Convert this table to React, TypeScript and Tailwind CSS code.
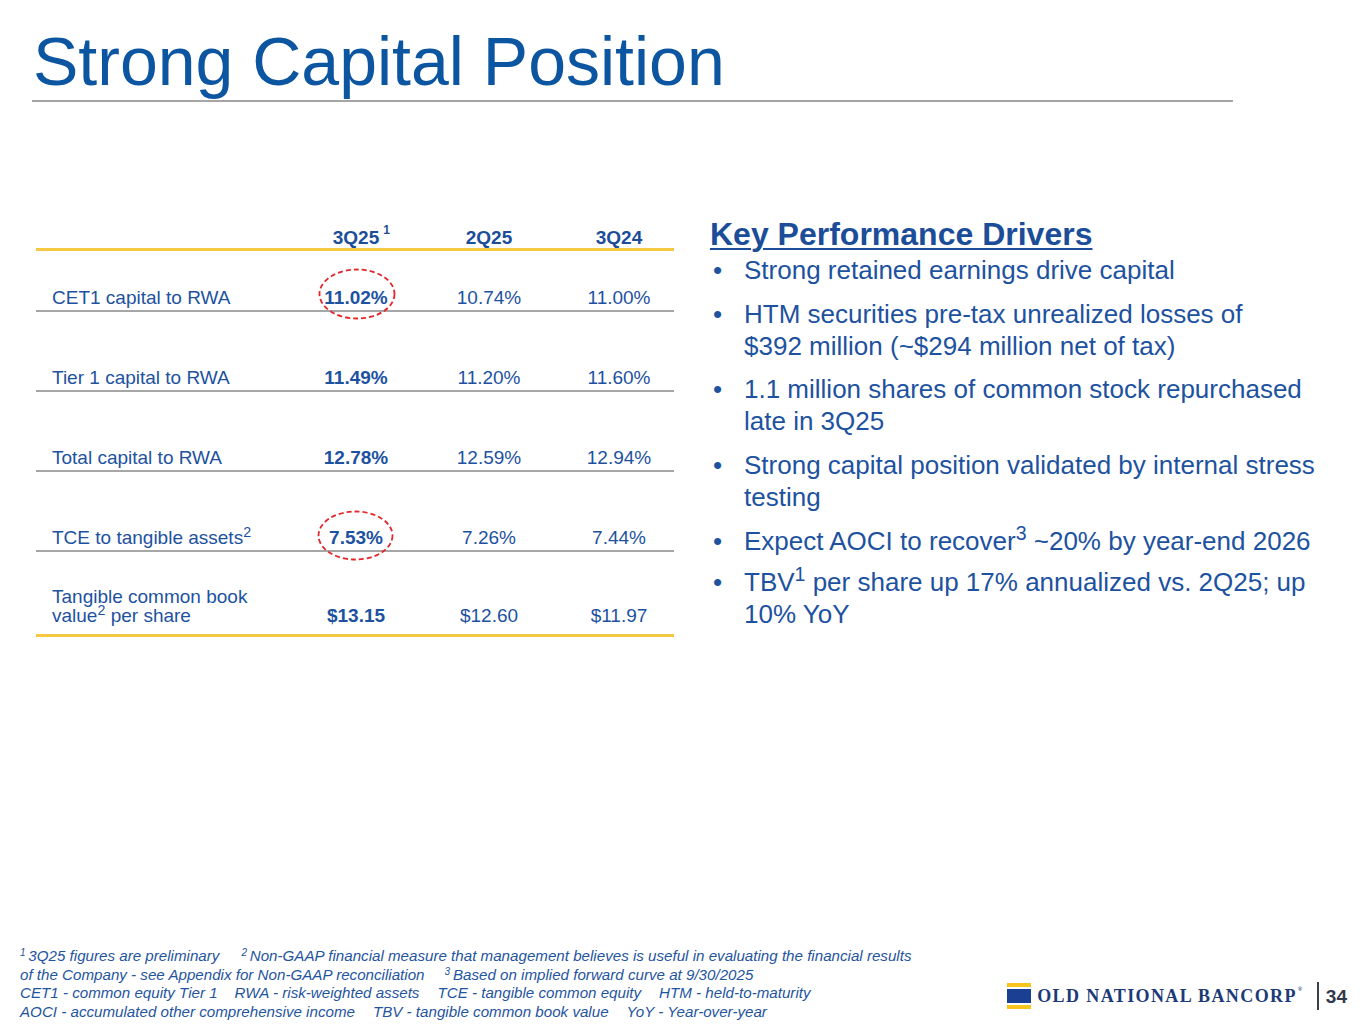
import React from "react";

type Row = {
  label: React.ReactNode;
  a: string;
  b: string;
  c: string;
  circle?: { left: number; top: number; w: number; h: number };
  last?: boolean;
  first?: boolean;
};

const rows: Row[] = [
  { label: "CET1 capital to RWA", a: "11.02%", b: "10.74%", c: "11.00%", circle: { left: -6, top: -20, w: 78, h: 52 }, first: true },
  { label: "Tier 1 capital to RWA", a: "11.49%", b: "11.20%", c: "11.60%" },
  { label: "Total capital to RWA", a: "12.78%", b: "12.59%", c: "12.94%" },
  {
    label: (
      <>
        TCE to tangible assets<sup>2</sup>
      </>
    ),
    a: "7.53%",
    b: "7.26%",
    c: "7.44%",
    circle: { left: -12, top: -18, w: 77, h: 51 },
  },
  {
    label: (
      <>
        Tangible common book
        <br />
        value<sup>2</sup> per share
      </>
    ),
    a: "$13.15",
    b: "$12.60",
    c: "$11.97",
    last: true,
  },
];

function Ellipse({ w, h }: { w: number; h: number }) {
  return (
    <svg width={w} height={h} viewBox={`0 0 ${w} ${h}`} className="block">
      <ellipse
        cx={w / 2}
        cy={h / 2}
        rx={w / 2 - 1.5}
        ry={h / 2 - 1.5}
        fill="none"
        stroke="#e3262c"
        strokeWidth="1.8"
        strokeDasharray="5 3"
      />
    </svg>
  );
}

function TableRow({ r }: { r: Row }) {
  const cls = r.last
    ? "h-[85px] pb-[9px] border-b-[3px] border-[#f5c842]"
    : r.first
    ? "h-[61px] pb-[3px] border-b-2 border-[#a6a6a6]"
    : "h-[80px] pb-[3px] border-b-2 border-[#a6a6a6]";
  return (
    <div className={`grid grid-cols-[255px_130px_136px_117px] items-end ${cls}`}>
      <div className="pl-[16px]">{r.label}</div>
      <div className="text-center font-bold">
        <span className="relative inline-block">
          {r.a}
          {r.circle && (
            <span
              className="absolute"
              style={{ left: r.circle.left, top: r.circle.top }}
            >
              <Ellipse w={r.circle.w} h={r.circle.h} />
            </span>
          )}
        </span>
      </div>
      <div className="text-center">{r.b}</div>
      <div className="text-center pl-[7px]">{r.c}</div>
    </div>
  );
}

const bullets: React.ReactNode[] = [
  <>Strong retained earnings drive capital</>,
  <>
    HTM securities pre-tax unrealized losses of
    <br />
    $392 million (~$294 million net of tax)
  </>,
  <>
    1.1 million shares of common stock repurchased
    <br />
    late in 3Q25
  </>,
  <>
    Strong capital position validated by internal stress
    <br />
    testing
  </>,
  <>
    Expect AOCI to recover<sup>3</sup> ~20% by year-end 2026
  </>,
  <>
    TBV<sup>1</sup> per share up 17% annualized vs. 2Q25; up
    <br />
    10% YoY
  </>,
];

const bulletGaps = ["", "mt-[12px]", "mt-[11px]", "mt-[12px]", "mt-[12px]", "mt-[9px]"];

export default function App() {
  return (
    <div className="w-[1365px] h-[1024px] bg-white flex flex-col font-['Liberation_Sans',Arial,sans-serif] overflow-hidden">
      {/* Title */}
      <div className="pt-[27px] pl-[33px]">
        <h1 className="text-[68px] leading-[68px] text-[#0b55a1] font-normal whitespace-nowrap">
          Strong Capital Position
        </h1>
      </div>
      <div className="mt-[5px] ml-[32px] w-[1201px] h-[2px] bg-[#a5a5a5]" />

      {/* Main */}
      <div className="mt-[114px] flex items-start">
        {/* Table */}
        <div className="ml-[36px] w-[638px] pt-[10px] text-[19px] leading-[19px] text-[#1d52a0]">
          <div className="grid grid-cols-[255px_130px_136px_117px] items-end h-[25px] pb-[1px] border-b-[3px] border-[#f5c842] font-bold text-[#1b4d98]">
            <div />
            <div className="text-center">
              <span className="relative inline-block">
                3Q25
                <span className="absolute left-full top-[-4px] ml-[4px] text-[12px] leading-[12px]">1</span>
              </span>
            </div>
            <div className="text-center">2Q25</div>
            <div className="text-center pl-[7px]">3Q24</div>
          </div>
          {rows.map((r, i) => (
            <TableRow key={i} r={r} />
          ))}
        </div>

        {/* Key drivers */}
        <div className="ml-[36px] flex-1 text-[#1d52a0]">
          <h2 className="text-[32px] leading-[36px] font-bold text-[#1b4d98] underline decoration-[2px] underline-offset-[3px] whitespace-nowrap">
            Key Performance Drivers
          </h2>
          <ul className="mt-[2px] ml-[3px] text-[26px] leading-[32px]">
            {bullets.map((b, i) => (
              <li key={i} className={`flex whitespace-nowrap ${bulletGaps[i]}`}>
                <span className="w-[31px] shrink-0">•</span>
                <span>{b}</span>
              </li>
            ))}
          </ul>
        </div>
      </div>

      <div className="flex-1" />

      {/* Footer */}
      <div className="flex justify-between items-end pb-[3px] pl-[20px] pr-[18px]">
        <div className="text-[15.15px] leading-[18.5px] italic text-[#1f55a0] whitespace-nowrap">
          <div>
            <sup className="text-[10px]">1 </sup>
            <span className="mr-[22px]">3Q25 figures are preliminary</span>
            <sup className="text-[10px]">2 </sup>
            Non-GAAP financial measure that management believes is useful in evaluating the financial results
          </div>
          <div>
            <span className="mr-[20px]">of the Company - see Appendix for Non-GAAP reconciliation</span>
            <sup className="text-[10px]">3 </sup>
            Based on implied forward curve at 9/30/2025
          </div>
          <div>
            <span className="mr-[17px]">CET1 - common equity Tier 1</span>
            <span className="mr-[18px]">RWA - risk-weighted assets</span>
            <span className="mr-[18px]">TCE - tangible common equity</span>
            <span>HTM - held-to-maturity</span>
          </div>
          <div>
            <span className="mr-[18px]">AOCI - accumulated other comprehensive income</span>
            <span className="mr-[18px]">TBV - tangible common book value</span>
            <span>YoY - Year-over-year</span>
          </div>
        </div>

        <div className="flex items-center mb-[11px]">
          {/* Logo mark */}
          <div className="flex flex-col w-[24px]">
            <div className="h-[4px] bg-[#f7c51c]" />
            <div className="h-[14px] mt-[2px] bg-[#1b3f92]" />
            <div className="h-[4px] mt-[2px] bg-[#f7c51c]" />
          </div>
          <div className="ml-[6px] relative font-['Liberation_Serif',serif] font-bold text-[18px] leading-[18px] tracking-[1.4px] text-[#1c3a78] whitespace-nowrap">
            OLD NATIONAL BANCORP
            <span className="absolute top-[-1px] left-full ml-[1px] text-[6px] leading-[6px] tracking-normal">®</span>
          </div>
          <div className="ml-[20px] w-[2px] h-[28px] bg-[#3a3f4c]" />
          <div className="ml-[7px] text-[19px] leading-[19px] font-bold text-[#33394a]">34</div>
        </div>
      </div>
    </div>
  );
}
